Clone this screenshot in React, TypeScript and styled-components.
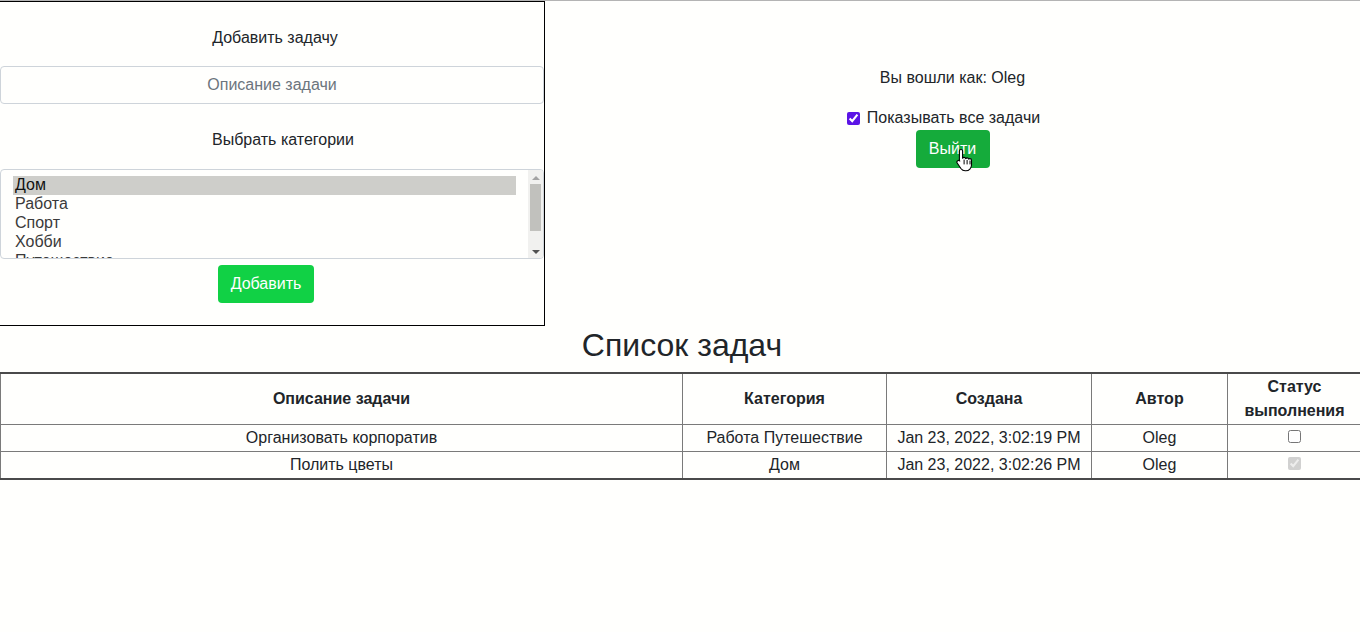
import React, { useState } from "react";
import styled, { createGlobalStyle } from "styled-components";

const GlobalStyle = createGlobalStyle`
  * {
    box-sizing: border-box;
  }
  body {
    margin: 0;
    background-color: #fffffd;
    font-family: "Liberation Sans", Arial, sans-serif;
    font-size: 16px;
    color: #212529;
  }
`;

const Page = styled.div`
  width: 1360px;
  border-top: 1px solid #b4b4b4;
  overflow: hidden;
`;

const TopSection = styled.div`
  display: grid;
  grid-template-columns: 545px 1fr;
  align-items: start;
`;

const AddPanel = styled.form`
  display: flex;
  flex-direction: column;
  align-items: center;
  height: 325px;
  margin-left: -1px;
  border: 1px solid #000;
  padding-top: 24px;
`;

const PanelTitle = styled.div`
  line-height: 24px;
  margin-bottom: 16px;
  padding-left: 6px;
`;

const TaskInput = styled.input`
  width: 544px;
  height: 38px;
  padding: 6px 12px;
  border: 1px solid #ced4da;
  border-radius: 4px;
  background: #fffffd;
  font-family: inherit;
  font-size: 16px;
  text-align: center;
  color: #212529;
  &::placeholder {
    color: #6c757d;
  }
`;

const SectionLabel = styled.div`
  line-height: 24px;
  margin-top: 24px;
  margin-bottom: 17px;
  padding-left: 22px;
`;

const ListBox = styled.div`
  display: flex;
  width: 544px;
  height: 90px;
  border: 1px solid #ced4da;
  border-radius: 4px;
  overflow: hidden;
`;

const OptionList = styled.div`
  flex: 1;
  padding: 6px 12px 0 12px;
`;

const Option = styled.div<{ $selected?: boolean }>`
  height: 19px;
  line-height: 17px;
  padding-left: 2px;
  color: ${(p) => (p.$selected ? "#111" : "#3a3a3a")};
  background: ${(p) => (p.$selected ? "#cececa" : "transparent")};
`;

const ScrollTrack = styled.div`
  display: flex;
  flex-direction: column;
  align-items: center;
  width: 15px;
  background: #f1f1ef;
`;

const ScrollArrow = styled.div<{ $down?: boolean }>`
  width: 0;
  height: 0;
  margin: 6px 0 4px;
  border-left: 4px solid transparent;
  border-right: 4px solid transparent;
  ${(p) =>
    p.$down
      ? "border-top: 4px solid #505050; margin-top: auto;"
      : "border-bottom: 4px solid #a3a3a3;"}
`;

const ScrollThumb = styled.div`
  width: 11px;
  height: 47px;
  background: #c1c1bd;
`;

const GreenButton = styled.button<{ $dark?: boolean }>`
  position: relative;
  height: 38px;
  padding: 0 12px;
  border: none;
  border-radius: 4px;
  background: ${(p) => (p.$dark ? "#15ab3b" : "#11d145")};
  color: #fff;
  font-family: inherit;
  font-size: 16px;
  line-height: 24px;
  cursor: pointer;
`;

const AddButton = styled(GreenButton)`
  margin-top: 6px;
  margin-right: 12px;
  width: 96px;
`;

const UserPanel = styled.div`
  display: flex;
  flex-direction: column;
  align-items: center;
  padding-top: 65px;
`;

const UserLine = styled.div`
  line-height: 24px;
  margin-bottom: 16px;
`;

const CheckRow = styled.label`
  display: flex;
  align-items: center;
  gap: 7px;
  margin-right: 18px;
  line-height: 24px;
  height: 24px;
`;

const CheckBox = styled.input`
  margin: 0;
  width: 13px;
  height: 13px;
  accent-color: #5b14e6;
`;

const LogoutButton = styled(GreenButton)`
  width: 74px;
`;

const Pointer = styled.svg`
  position: absolute;
  left: 40px;
  top: 18px;
  pointer-events: none;
`;

const Heading = styled.h2`
  margin: 0 0 8px;
  padding-left: 4px;
  text-align: center;
  font-weight: 400;
  font-size: 32px;
  line-height: 38px;
  color: #212529;
`;

const TaskTable = styled.table`
  width: 1361px;
  table-layout: fixed;
  border-collapse: collapse;
  border-top: 2px solid #4a4a4a;
  border-bottom: 2px solid #4a4a4a;
`;

const HeadCell = styled.th`
  border: 1px solid #7a7a7a;
  padding: 1px 4px;
  line-height: 24px;
  font-weight: 700;
  text-align: center;
  vertical-align: middle;
`;

const Cell = styled.td`
  border: 1px solid #7a7a7a;
  padding: 1px 4px;
  line-height: 24px;
  text-align: center;
  vertical-align: middle;
  white-space: nowrap;
`;

const DoneBox = styled.input`
  margin: 0;
  width: 13px;
  height: 13px;
  vertical-align: middle;
  position: relative;
  top: -2px;
`;

const categories = ["Дом", "Работа", "Спорт", "Хобби", "Путешествие"];

const tasks = [
  {
    text: "Организовать корпоратив",
    category: "Работа Путешествие",
    created: "Jan 23, 2022, 3:02:19 PM",
    author: "Oleg",
    done: false,
  },
  {
    text: "Полить цветы",
    category: "Дом",
    created: "Jan 23, 2022, 3:02:26 PM",
    author: "Oleg",
    done: true,
  },
];

export default function App() {
  const [showAll, setShowAll] = useState(true);
  const [selected, setSelected] = useState("Дом");

  return (
    <Page>
      <GlobalStyle />
      <TopSection>
        <AddPanel onSubmit={(e) => e.preventDefault()}>
          <PanelTitle>Добавить задачу</PanelTitle>
          <TaskInput placeholder="Описание задачи" />
          <SectionLabel>Выбрать категории</SectionLabel>
          <ListBox>
            <OptionList>
              {categories.map((c) => (
                <Option
                  key={c}
                  $selected={c === selected}
                  onClick={() => setSelected(c)}
                >
                  {c}
                </Option>
              ))}
            </OptionList>
            <ScrollTrack>
              <ScrollArrow />
              <ScrollThumb />
              <ScrollArrow $down />
            </ScrollTrack>
          </ListBox>
          <AddButton type="submit">Добавить</AddButton>
        </AddPanel>

        <UserPanel>
          <UserLine>Вы вошли как: Oleg</UserLine>
          <CheckRow>
            <CheckBox
              type="checkbox"
              checked={showAll}
              onChange={(e) => setShowAll(e.target.checked)}
            />
            Показывать все задачи
          </CheckRow>
          <LogoutButton $dark>
            Выйти
            <Pointer width="18" height="24" viewBox="0 0 18 24">
              <path
                d="M5 1.5c0.9 0 1.6 0.7 1.6 1.6v7.2c0.3-0.6 0.9-0.9 1.5-0.9 0.8 0 1.4 0.5 1.6 1.2 0.3-0.4 0.8-0.7 1.4-0.7 0.8 0 1.4 0.5 1.6 1.2 0.3-0.3 0.7-0.5 1.2-0.5 0.9 0 1.6 0.7 1.6 1.6v4.8c0 3.2-2.4 5.8-5.6 5.8H9.2c-1.8 0-3.3-0.9-4.3-2.3L1.2 15c-0.5-0.8-0.3-1.8 0.5-2.3 0.7-0.4 1.6-0.3 2.1 0.3l-0.4-0.4V3.1C3.4 2.2 4.1 1.5 5 1.5z"
                fill="#fff"
                stroke="#000"
                strokeWidth="1.1"
                strokeLinejoin="round"
              />
              <path
                d="M8.1 12v4M11.1 12.4v3.6M14 13v3"
                stroke="#000"
                strokeWidth="1"
                strokeLinecap="round"
              />
            </Pointer>
          </LogoutButton>
        </UserPanel>
      </TopSection>

      <Heading>Список задач</Heading>

      <TaskTable>
        <colgroup>
          <col style={{ width: 682 }} />
          <col style={{ width: 204 }} />
          <col style={{ width: 205 }} />
          <col style={{ width: 136 }} />
          <col style={{ width: 134 }} />
        </colgroup>
        <thead>
          <tr>
            <HeadCell>Описание задачи</HeadCell>
            <HeadCell>Категория</HeadCell>
            <HeadCell>Создана</HeadCell>
            <HeadCell>Автор</HeadCell>
            <HeadCell>
              Статус
              <br />
              выполнения
            </HeadCell>
          </tr>
        </thead>
        <tbody>
          {tasks.map((t) => (
            <tr key={t.text}>
              <Cell>{t.text}</Cell>
              <Cell>{t.category}</Cell>
              <Cell>{t.created}</Cell>
              <Cell>{t.author}</Cell>
              <Cell>
                <DoneBox
                  type="checkbox"
                  defaultChecked={t.done}
                  disabled={t.done}
                />
              </Cell>
            </tr>
          ))}
        </tbody>
      </TaskTable>
    </Page>
  );
}
